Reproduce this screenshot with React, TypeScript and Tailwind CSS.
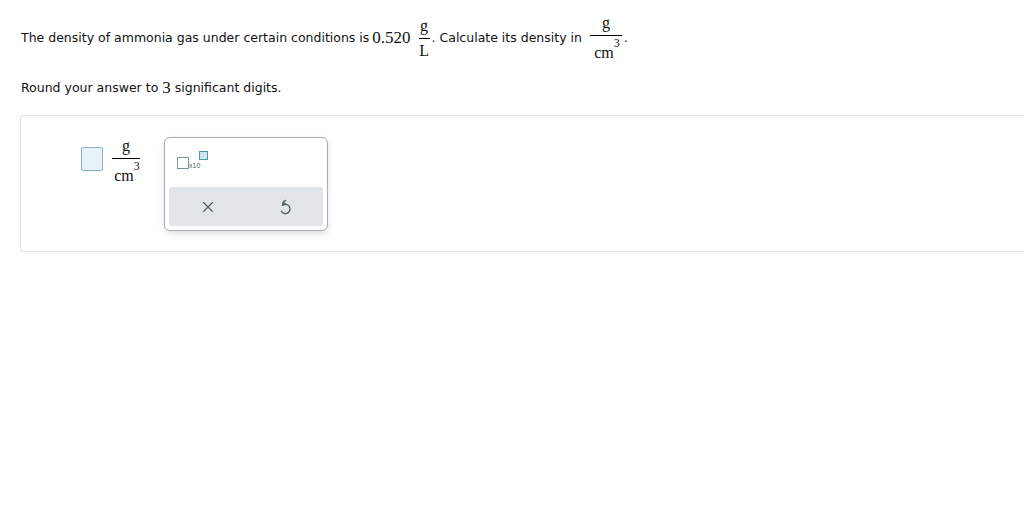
import { X } from 'lucide-react'

const textFont = { fontFamily: '"DejaVu Sans", Verdana, sans-serif' }

function Frac({ num, den, width, denPad }: { num: React.ReactNode; den: React.ReactNode; width: string; denPad: string }) {
  return (
    <span className="inline-flex flex-col items-center align-middle font-['Liberation_Serif',serif] text-[16px] leading-none">
      <span className="pb-[4px]">{num}</span>
      <span className={`border-t border-black ${width}`} />
      <span className={denPad}>{den}</span>
    </span>
  )
}

function Cm3() {
  return (
    <span className="relative">
      cm<span className="absolute left-full -top-[7px] text-[12px]">3</span>
    </span>
  )
}

function UndoIcon() {
  return (
    <svg width="16" height="16" viewBox="0 0 16 16" fill="none" stroke="#4b5a63" strokeWidth="1.3" strokeLinecap="round" strokeLinejoin="round">
      <path d="M8.6 1.4 L6 3.2 L8.4 5" />
      <path d="M6.2 3.2 L5.6 6.4 A4.6 4.6 0 1 1 4.4 12.2" />
    </svg>
  )
}

export default function App() {
  return (
    <div className="w-[1024px] h-[525px] bg-white text-[12.5px] text-[#111] overflow-hidden" style={textFont}>
      <div className="pl-[21px] pt-[18px]">
        <div className="flex items-center h-[40px]">
          <span>The density of ammonia gas under certain conditions is</span>
          <span className="font-['Liberation_Serif',serif] text-[17px] ml-[3px] mr-[8px]">0.520</span>
          <Frac num="g" den="L" width="w-[11px]" denPad="pt-[4px]" />
          <span className="ml-[2px]">. Calculate its density in</span>
          <span className="ml-[8px]">
            <Frac num="g" den={<Cm3 />} width="w-[32px]" denPad="pt-[9px] pr-[4px]" />
          </span>
          <span className="ml-[2px]">.</span>
        </div>
        <div className="mt-[20px] h-[20px] flex items-center">
          <span>Round your answer to</span>
          <span className="font-['Liberation_Serif',serif] text-[17px] mx-[4px]">3</span>
          <span>significant digits.</span>
        </div>
      </div>

      <div className="ml-[20px] mt-[17px] w-[1020px] h-[137px] border border-[#dde1e3] rounded-[3px] flex items-start pt-[21px]">
        <div className="ml-[60px] mt-[10px] w-[22px] h-[24px] border border-[#8db3bf] bg-[#e7f3f8] rounded-[2px]" />
        <div className="ml-[9px] mt-[1px]">
          <Frac num="g" den={<Cm3 />} width="w-[28px]" denPad="pt-[9px] pr-[4px]" />
        </div>
        <div className="ml-[24px] w-[164px] h-[94px] border border-[#a3adb3] rounded-[6px] bg-white shadow-[0_3px_6px_rgba(0,0,0,0.12)] flex flex-col px-[4px] pb-[4px]">
          <div className="flex-1 relative">
            <div className="absolute left-[8px] top-[19px] w-[12px] h-[12px] border border-[#7f939c] bg-white" />
            <span className="absolute left-[20px] top-[24px] text-[7px] text-[#4d5b63] leading-none font-['Liberation_Sans',sans-serif]">x10</span>
            <div className="absolute left-[30px] top-[13px] w-[9px] h-[9px] border border-[#4d96ac] bg-[#cbe6ef]" />
          </div>
          <div className="h-[39px] bg-[#e1e5e8] rounded-[3px] flex items-center">
            <div className="w-[77px] flex justify-center">
              <X size={18} strokeWidth={1.5} color="#4b5a63" />
            </div>
            <div className="w-[77px] flex justify-center">
              <UndoIcon />
            </div>
          </div>
        </div>
      </div>
    </div>
  )
}
